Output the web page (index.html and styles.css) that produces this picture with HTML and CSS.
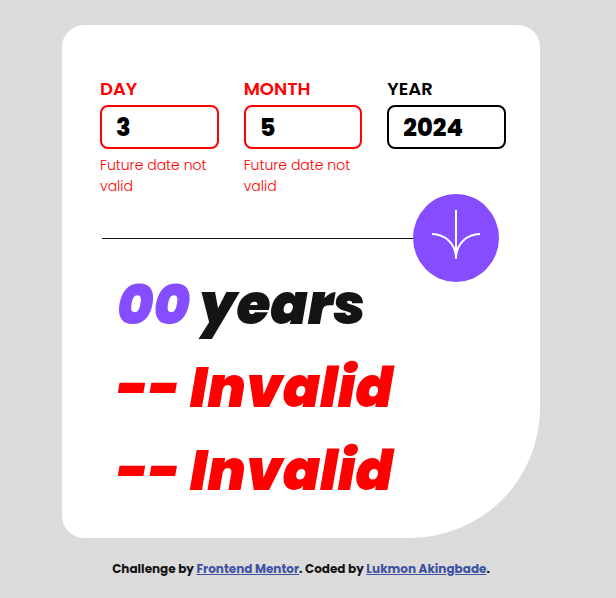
FILE: index.html
```html
<!DOCTYPE html>
<html lang="en">
<head>
<meta charset="utf-8">
<meta name="viewport" content="width=device-width, initial-scale=1">
<title>Age calculator</title>
<link rel="stylesheet" href="styles.css">
</head>
<body>
<main class="card">
  <form>
    <div class="fields">
      <div class="field invalid">
        <label for="day">DAY</label>
        <input id="day" type="text" inputmode="numeric" value="3" aria-describedby="day-error">
        <p class="error" id="day-error">Future date not valid</p>
      </div>
      <div class="field invalid">
        <label for="month">MONTH</label>
        <input id="month" type="text" inputmode="numeric" value="5" aria-describedby="month-error">
        <p class="error" id="month-error">Future date not valid</p>
      </div>
      <div class="field">
        <label for="year">YEAR</label>
        <input id="year" type="text" inputmode="numeric" value="2024">
      </div>
    </div>
    <div class="divider">
      <span class="line"></span>
      <button class="submit" type="button" aria-label="Calculate age">
        <svg width="50" height="50" viewBox="0 0 50 50" fill="none" stroke="#fff" stroke-width="2" aria-hidden="true">
          <path d="M25 1V49.500"/>
          <path d="M1 25C14 25 25 35 25 49.500C25 35 36 25 49 25"/>
        </svg>
      </button>
    </div>
  </form>
  <section class="results">
    <p><span class="number">00</span> years</p>
    <p class="bad">-- Invalid</p>
    <p class="bad">-- Invalid</p>
  </section>
</main>
<footer>Challenge by <a href="#mentor">Frontend Mentor</a>. Coded by <a href="#author">Lukmon Akingbade</a>.</footer>
</body>
</html>
```

FILE: styles.css
```css
* {
  box-sizing: border-box;
}

body {
  margin: 0;
  padding: 25px 76px 0 62px;
  background: #dbdbdb;
  color: #141414;
  font-family: Poppins, Inter, sans-serif;
}

p {
  margin: 0;
}

.card {
  padding: 52px 34px 26px 38px;
  background: #fff;
  border-radius: 22px 22px 130px 22px;
}

.fields {
  display: grid;
  grid-template-columns: repeat(3, 1fr);
  gap: 25px;
}

.field {
  display: flex;
  flex-direction: column;
  color: #000;
}

.field label {
  margin-bottom: 4px;
  font-size: 18px;
  font-weight: 600;
  line-height: 24px;
}

.field input {
  width: 100%;
  height: 44px;
  padding: 0 14px;
  border: 2px solid #000;
  border-radius: 8px;
  background: #fff;
  color: #000;
  font-family: inherit;
  font-size: 24px;
  font-weight: 800;
}

.field.invalid {
  color: #f00;
}

.field.invalid input {
  border-color: #f00;
}

.error {
  margin-top: 6px;
  font-size: 14px;
  font-weight: 300;
  line-height: 21px;
}

.divider {
  display: flex;
  align-items: center;
  margin: -3px 7px 0 2px;
}

.line {
  flex: 1;
  height: 1px;
  background: #141414;
}

.submit {
  display: grid;
  place-items: center;
  width: 86px;
  height: 88px;
  padding: 0 0 8px;
  border: 0;
  border-radius: 50%;
  background: #854dff;
}

.results {
  margin-top: -19px;
  padding-left: 17px;
  font-size: 55px;
  font-style: italic;
  font-weight: 900;
  line-height: 83px;
}

.number {
  color: #854dff;
}

.bad {
  color: #f00;
}

footer {
  margin-top: 21px;
  font-size: 12px;
  font-weight: 700;
  line-height: 20px;
  text-align: center;
}

footer a {
  color: #3e52a3;
}
```
